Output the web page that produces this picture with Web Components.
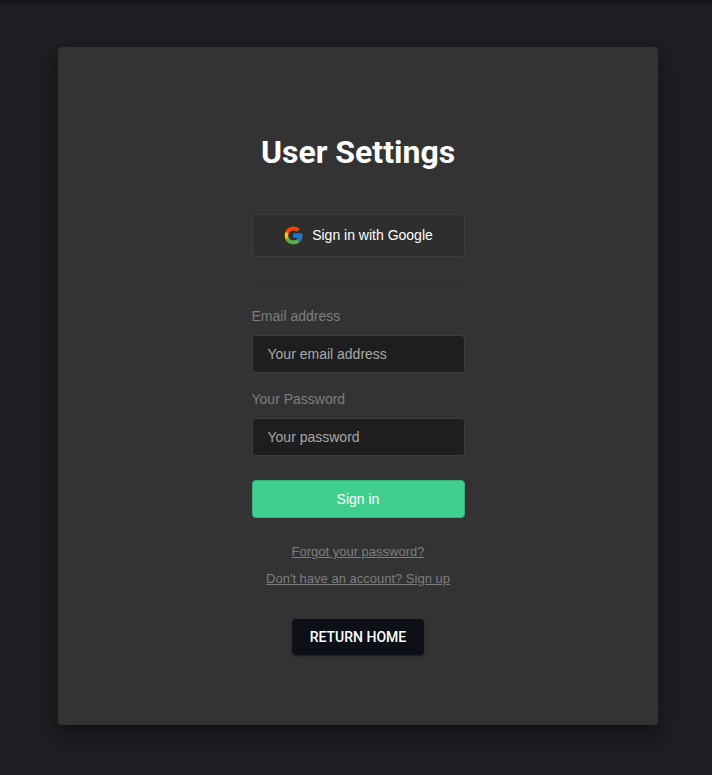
<!DOCTYPE html>
<html lang="en">
<head>
<meta charset="utf-8">
<title>User Settings</title>
<style>
  html { height: 100%; background: #1e1e23; }
  body {
    margin: 0;
    min-height: 100%;
    font-family: "Liberation Sans", Arial, sans-serif;
    font-size: 14px;
    color: #fff;
    background: linear-gradient(#161619, #1e1e23 6px);
  }
</style>
</head>
<body>
<settings-page>
  <settings-card heading="User Settings">
    <auth-form>
      <social-button slot="social">Sign in with Google</social-button>
      <text-field label="Email address" type="email" placeholder="Your email address"></text-field>
      <text-field label="Your Password" type="password" placeholder="Your password"></text-field>
      <submit-button slot="submit">Sign in</submit-button>
      <text-link slot="links" href="#forgot">Forgot your password?</text-link>
      <text-link slot="links" href="#signup">Don't have an account? Sign up</text-link>
    </auth-form>
    <home-button slot="footer">Return home</home-button>
  </settings-card>
</settings-page>

<script>
const define = (name, html, setup) => {
  const template = document.createElement('template');
  template.innerHTML = html;
  customElements.define(name, class extends HTMLElement {
    constructor() {
      super();
      this.attachShadow({ mode: 'open' }).append(template.content.cloneNode(true));
    }
    connectedCallback() {
      if (setup) setup(this, this.shadowRoot);
    }
  });
};

define('settings-page', `
  <style>
    :host { display: flex; justify-content: center; padding: 47px 0 50px 4px; }
  </style>
  <slot></slot>`);

define('settings-card', `
  <style>
    :host {
      display: flex; flex-direction: column; align-items: center;
      box-sizing: border-box; width: 100%; max-width: 600px;
      padding: 84px 16px 70px;
      background: #333; border-radius: 4px;
      box-shadow: 0 7px 8px -4px rgba(0,0,0,.2), 0 12px 17px 2px rgba(0,0,0,.14), 0 5px 22px 4px rgba(0,0,0,.12);
    }
    h1 { margin: 0 0 40px; font: 700 32px/43px Roboto, sans-serif; }
    footer { margin-top: 33px; }
  </style>
  <h1></h1>
  <slot></slot>
  <footer><slot name="footer"></slot></footer>`,
  (el, root) => { root.querySelector('h1').textContent = el.getAttribute('heading'); });

define('auth-form', `
  <style>
    :host { display: block; width: 213px; }
    hr { height: 1px; margin: 24px 0; border: 0; background: #2e2e2e; }
    .fields { display: flex; flex-direction: column; gap: 16px; margin-bottom: 24px; }
    nav { display: flex; flex-direction: column; align-items: center; gap: 12px; margin-top: 26px; }
  </style>
  <slot name="social"></slot>
  <hr>
  <div class="fields"><slot></slot></div>
  <slot name="submit"></slot>
  <nav><slot name="links"></slot></nav>`);

define('social-button', `
  <style>
    :host { display: block; }
    button {
      display: flex; align-items: center; justify-content: center; gap: 8px;
      box-sizing: border-box; width: 100%; padding: 10px 15px;
      font: inherit; line-height: 21px; color: #fff; cursor: pointer;
      background: #2e2e2e; border: 1px solid #3e3e3e; border-radius: 4px;
    }
    svg { display: block; }
  </style>
  <button type="button">
    <svg width="21" height="21" viewBox="0 0 48 48" aria-hidden="true">
      <path fill="#FFC107" d="M43.611 20.083H42V20H24v8h11.303c-1.649 4.657-6.08 8-11.303 8-6.627 0-12-5.373-12-12s5.373-12 12-12c3.059 0 5.842 1.154 7.961 3.039l5.657-5.657C34.046 6.053 29.268 4 24 4 12.955 4 4 12.955 4 24s8.955 20 20 20 20-8.955 20-20c0-1.341-.138-2.65-.389-3.917z"/>
      <path fill="#FF3D00" d="M6.306 14.691l6.571 4.819C14.655 15.108 18.961 12 24 12c3.059 0 5.842 1.154 7.961 3.039l5.657-5.657C34.046 6.053 29.268 4 24 4 16.318 4 9.656 8.337 6.306 14.691z"/>
      <path fill="#4CAF50" d="M24 44c5.166 0 9.86-1.977 13.409-5.192l-6.19-5.238A11.91 11.91 0 0 1 24 36c-5.202 0-9.619-3.317-11.283-7.946l-6.522 5.025C9.505 39.556 16.227 44 24 44z"/>
      <path fill="#1976D2" d="M43.611 20.083H42V20H24v8h11.303a12.04 12.04 0 0 1-4.087 5.571l.003-.002 6.19 5.238C36.971 39.205 44 34 44 24c0-1.341-.138-2.65-.389-3.917z"/>
    </svg>
    <span><slot></slot></span>
  </button>`);

define('text-field', `
  <style>
    :host { display: flex; flex-direction: column; gap: 8px; }
    label { line-height: 21px; color: #7e7e7e; }
    input {
      box-sizing: border-box; width: 100%; height: 38px; padding: 0 15px;
      font: inherit; color: #fff; outline: none;
      background: #1e1e1e; border: 1px solid #3e3e3e; border-radius: 4px;
    }
    input::placeholder { color: #a8a8a8; opacity: 1; }
  </style>
  <label for="input"></label>
  <input id="input">`,
  (el, root) => {
    const input = root.querySelector('input');
    root.querySelector('label').textContent = el.getAttribute('label');
    input.type = el.getAttribute('type');
    input.placeholder = el.getAttribute('placeholder');
  });

define('submit-button', `
  <style>
    :host { display: block; }
    button {
      display: block; box-sizing: border-box; width: 100%; height: 38px; padding: 0 15px;
      font: inherit; color: #fff; cursor: pointer;
      background: #40cf8f; border: 1px solid #34b27b; border-radius: 4px;
    }
  </style>
  <button type="submit"><slot></slot></button>`);

define('text-link', `
  <style>
    :host { display: block; font-size: 13px; line-height: 15px; }
    a { color: #7e7e7e; white-space: nowrap; text-decoration: underline; }
  </style>
  <a><slot></slot></a>`,
  (el, root) => { root.querySelector('a').href = el.getAttribute('href'); });

define('home-button', `
  <style>
    :host { display: block; }
    button {
      display: block; padding: 6px 18px; border: 0; border-radius: 4px; cursor: pointer;
      font: 500 14px/24px Roboto, sans-serif; text-transform: uppercase;
      color: #fff; background: #0d1117;
      box-shadow: 0 3px 1px -2px rgba(0,0,0,.2), 0 2px 2px 0 rgba(0,0,0,.14), 0 1px 5px 0 rgba(0,0,0,.12);
    }
  </style>
  <button type="button"><slot></slot></button>`);
</script>
</body>
</html>
